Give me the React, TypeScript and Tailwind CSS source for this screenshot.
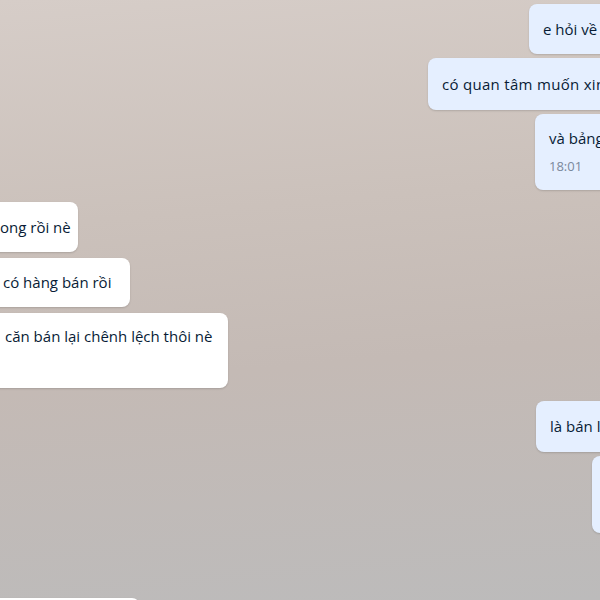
import React from "react";

export default function App() {
  const font = { fontFamily: '"Open Sans", "Noto Sans", sans-serif' };
  return (
    <div
      className="w-[600px] h-[600px] overflow-hidden bg-[linear-gradient(175deg,#d6cdc8_0%,#cbc1bb_35%,#c4bab5_60%,#bcbbbb_100%)] text-[#081c36] text-[15px]"
      style={font}
    >
      <div className="ml-[-40px] w-[780px] flex flex-col pt-[4px]">
        {/* right group 1 */}
        <div className="flex flex-col items-end gap-[4px]">
          <div className="w-[211px] h-[50px] bg-[#e5efff] rounded-lg shadow-[0_1px_2px_rgba(0,0,0,0.15)] pl-[14px] flex items-center whitespace-nowrap overflow-hidden">
            e hỏi về giá căn hộ
          </div>
          <div className="w-[312px] h-[52px] bg-[#e5efff] rounded-lg shadow-[0_1px_2px_rgba(0,0,0,0.15)] pl-[14px] flex items-center whitespace-nowrap overflow-hidden tracking-[0.3px]">
            có quan tâm muốn xin thông tin
          </div>
          <div className="w-[205px] h-[76px] bg-[#e5efff] rounded-lg shadow-[0_1px_2px_rgba(0,0,0,0.15)] pl-[14px] pt-[13px] flex flex-col whitespace-nowrap overflow-hidden">
            <span className="leading-[22px]">và bảng giá</span>
            <span className="mt-[8px] text-[13px] leading-[18px] text-[#7a889c]">18:01</span>
          </div>
        </div>

        {/* left group */}
        <div className="flex flex-col items-start mt-[12px] gap-[6px]">
          <div className="w-[118px] h-[50px] bg-white rounded-lg shadow-[0_1px_2px_rgba(0,0,0,0.15)] pl-[40px] flex items-center whitespace-nowrap overflow-hidden">
            ong rồi nè
          </div>
          <div className="w-[170px] h-[49px] bg-white rounded-lg shadow-[0_1px_2px_rgba(0,0,0,0.15)] pl-[43px] flex items-center whitespace-nowrap overflow-hidden">
            có hàng bán rồi
          </div>
          <div className="w-[268px] h-[75px] bg-white rounded-lg shadow-[0_1px_2px_rgba(0,0,0,0.15)] pl-[45px] pt-[12px] flex flex-col whitespace-nowrap overflow-hidden">
            <span className="leading-[22px]">căn bán lại chênh lệch thôi nè</span>
          </div>
        </div>

        {/* right group 2 */}
        <div className="flex flex-col items-end mt-[13px] gap-[4px]">
          <div className="w-[204px] h-[51px] bg-[#e5efff] rounded-lg shadow-[0_1px_2px_rgba(0,0,0,0.15)] pl-[14px] flex items-center whitespace-nowrap overflow-hidden">
            là bán lại hả chị
          </div>
          <div className="w-[148px] h-[77px] bg-[#e5efff] rounded-lg shadow-[0_1px_2px_rgba(0,0,0,0.15)]" />
        </div>

        {/* left bottom */}
        <div className="flex flex-col items-start mt-[65px]">
          <div className="w-[180px] h-[50px] bg-white rounded-lg shadow-[0_1px_2px_rgba(0,0,0,0.15)]" />
        </div>
      </div>
    </div>
  );
}
